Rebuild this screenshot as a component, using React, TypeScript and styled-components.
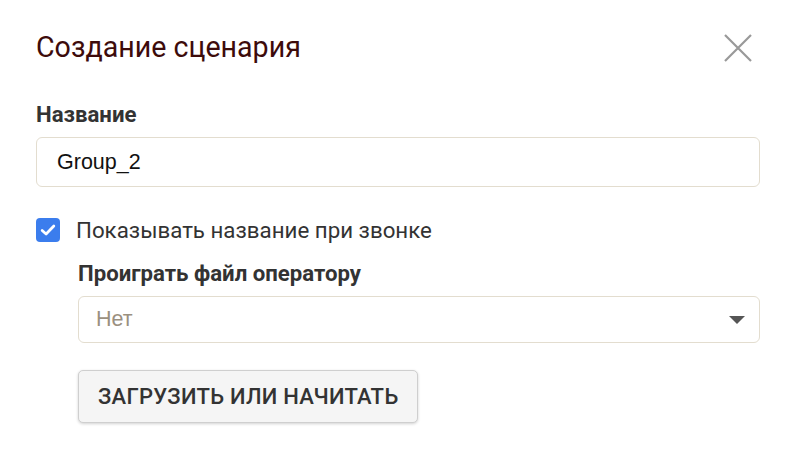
import React, { useState } from 'react';
import styled, { createGlobalStyle } from 'styled-components';

/* -------------------------- styles -------------------------- */
const Global = createGlobalStyle`
  html, body { margin: 0; padding: 0; background: #fff; }
  body { font-family: Roboto, 'Noto Sans', 'Liberation Sans', sans-serif; color: #333; }
  * { box-sizing: border-box; }
`;

const Dialog = styled.div`
  width: 796px; height: 460px; background: #fff;
  padding: 28px 36px 0 36px;
`;
const Header = styled.div`
  display: flex; justify-content: space-between; align-items: center;
  height: 40px; margin-bottom: 34px;
`;
const Title = styled.h2`
  margin: 0 0 2px; font-size: 28.6px; font-weight: 400; color: #3d0b0b; line-height: 36px;
`;
const Close = styled.button`
  width: 32px; height: 32px; padding: 0; margin-right: 6px;
  border: 0; background: none; cursor: pointer;
  display: flex; align-items: center; justify-content: center;
`;
const Label = styled.div`
  font-size: 22.2px; font-weight: 700; color: #333; line-height: 24px;
  margin-bottom: 11px;
`;
const Field = styled.div<{ $h: number; $pad: number }>`
  position: relative; display: flex; align-items: center;
  height: ${p => p.$h}px; border: 1px solid #e3ddcf; border-radius: 6px;
  padding: 0 20px 0 ${p => p.$pad}px; background: #fff;
`;
const Value = styled.span<{ $muted?: boolean }>`
  font-family: 'Liberation Sans', Arial, sans-serif; font-size: 21.5px;
  color: ${p => (p.$muted ? '#9b9080' : '#111')};
`;
const Caret = styled.span`
  margin-left: auto; margin-right: -6px;
  width: 0; height: 0;
  border-left: 8px solid transparent; border-right: 8px solid transparent;
  border-top: 8px solid #555;
`;
const CheckRow = styled.label`
  display: flex; align-items: center; gap: 16px;
  margin-top: 31px; cursor: pointer;
`;
const Box = styled.span`
  width: 24px; height: 24px; border-radius: 4px; background: #3b7ded;
  display: flex; align-items: center; justify-content: center;
`;
const CheckText = styled.span`
  font-size: 22.3px; color: #333; line-height: 24px;
`;
const Nested = styled.div`
  margin-left: 42px; margin-top: 19px;
`;
const Button = styled.button`
  margin-top: 27px; height: 53px; padding: 0 19px;
  background: #f5f5f5; border: 1px solid #cfcfcf; border-radius: 5px;
  box-shadow: 0 1px 3px rgba(0,0,0,.18);
  font-family: Roboto, 'Liberation Sans', sans-serif;
  font-size: 22px; font-weight: 500; color: #333; letter-spacing: 0.25px;
  cursor: pointer;
`;

/* ------------------------- component ------------------------ */
const App: React.FC = () => {
  const [show, setShow] = useState(true);

  return (
    <>
      <Global />
      <Dialog>
        <Header>
          <Title>Создание сценария</Title>
          <Close aria-label="close">
            <svg width="30" height="30" viewBox="0 0 30 30">
              <path d="M2 2 L28 28 M28 2 L2 28" stroke="#999" strokeWidth="2.2" />
            </svg>
          </Close>
        </Header>

        <Label>Название</Label>
        <Field $h={50} $pad={20}>
          <Value>Group_2</Value>
        </Field>

        <CheckRow onClick={() => setShow(!show)}>
          <Box>
            {show && (
              <svg width="18" height="18" viewBox="0 0 16 16">
                <path d="M2.8 8.4 L6.3 11.6 L13.2 4.4" fill="none" stroke="#fff" strokeWidth="2.4" strokeLinecap="round" strokeLinejoin="round" />
              </svg>
            )}
          </Box>
          <CheckText>Показывать название при звонке</CheckText>
        </CheckRow>

        <Nested>
          <Label>Проиграть файл оператору</Label>
          <Field $h={47} $pad={17}>
            <Value $muted>Нет</Value>
            <Caret />
          </Field>
          <Button>ЗАГРУЗИТЬ ИЛИ НАЧИТАТЬ</Button>
        </Nested>
      </Dialog>
    </>
  );
};

export default App;
